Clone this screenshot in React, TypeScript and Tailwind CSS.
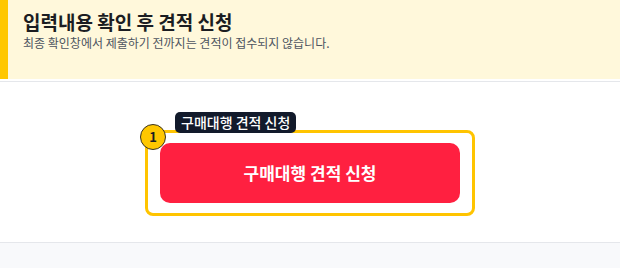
export default function App() {
  return (
    <div className="flex h-[268px] w-[620px] flex-col bg-white font-['Noto_Sans_CJK_KR',sans-serif]">
      {/* Notice header */}
      <div className="flex h-[79px] shrink-0 bg-[#FFF8DB]">
        <div className="w-2 bg-[#FFC700]" />
        <div className="pl-[15px] pt-[10px]">
          <h1 className="text-[19px] font-bold leading-[24px] text-[#1b1d22]">입력내용 확인 후 견적 신청</h1>
          <p className="mt-[2px] text-[12px] leading-[14px] text-[#4d5460]">
            최종 확인창에서 제출하기 전까지는 견적이 접수되지 않습니다.
          </p>
        </div>
      </div>

      {/* Action area */}
      <div className="mt-[2px] flex h-[162px] shrink-0 justify-center border-t border-b border-[#e5e7eb] pt-[48px]">
        <div className="relative h-[86px] w-[330px] rounded-[8px] border-[3px] border-[#FFC400] px-[12px] pt-[10px]">
          <span className="absolute left-[27px] top-[-21px] rounded-[5px] bg-[#121a2b] px-[6px] text-[14px] font-medium leading-[21px] text-white">
            구매대행 견적 신청
          </span>
          <span className="absolute left-[-8px] top-[-9px] flex h-[26px] w-[26px] items-center justify-center rounded-full border border-[#3a3320] bg-[#FFC700] text-[13px] font-bold text-[#1b1d22]">
            1
          </span>
          <button className="flex h-[60px] w-full items-center justify-center rounded-[10px] bg-[#FF2040] text-[17px] font-bold text-white">
            구매대행 견적 신청
          </button>
        </div>
      </div>

      <div className="flex-1 bg-[#F8F9FB]" />
    </div>
  )
}
